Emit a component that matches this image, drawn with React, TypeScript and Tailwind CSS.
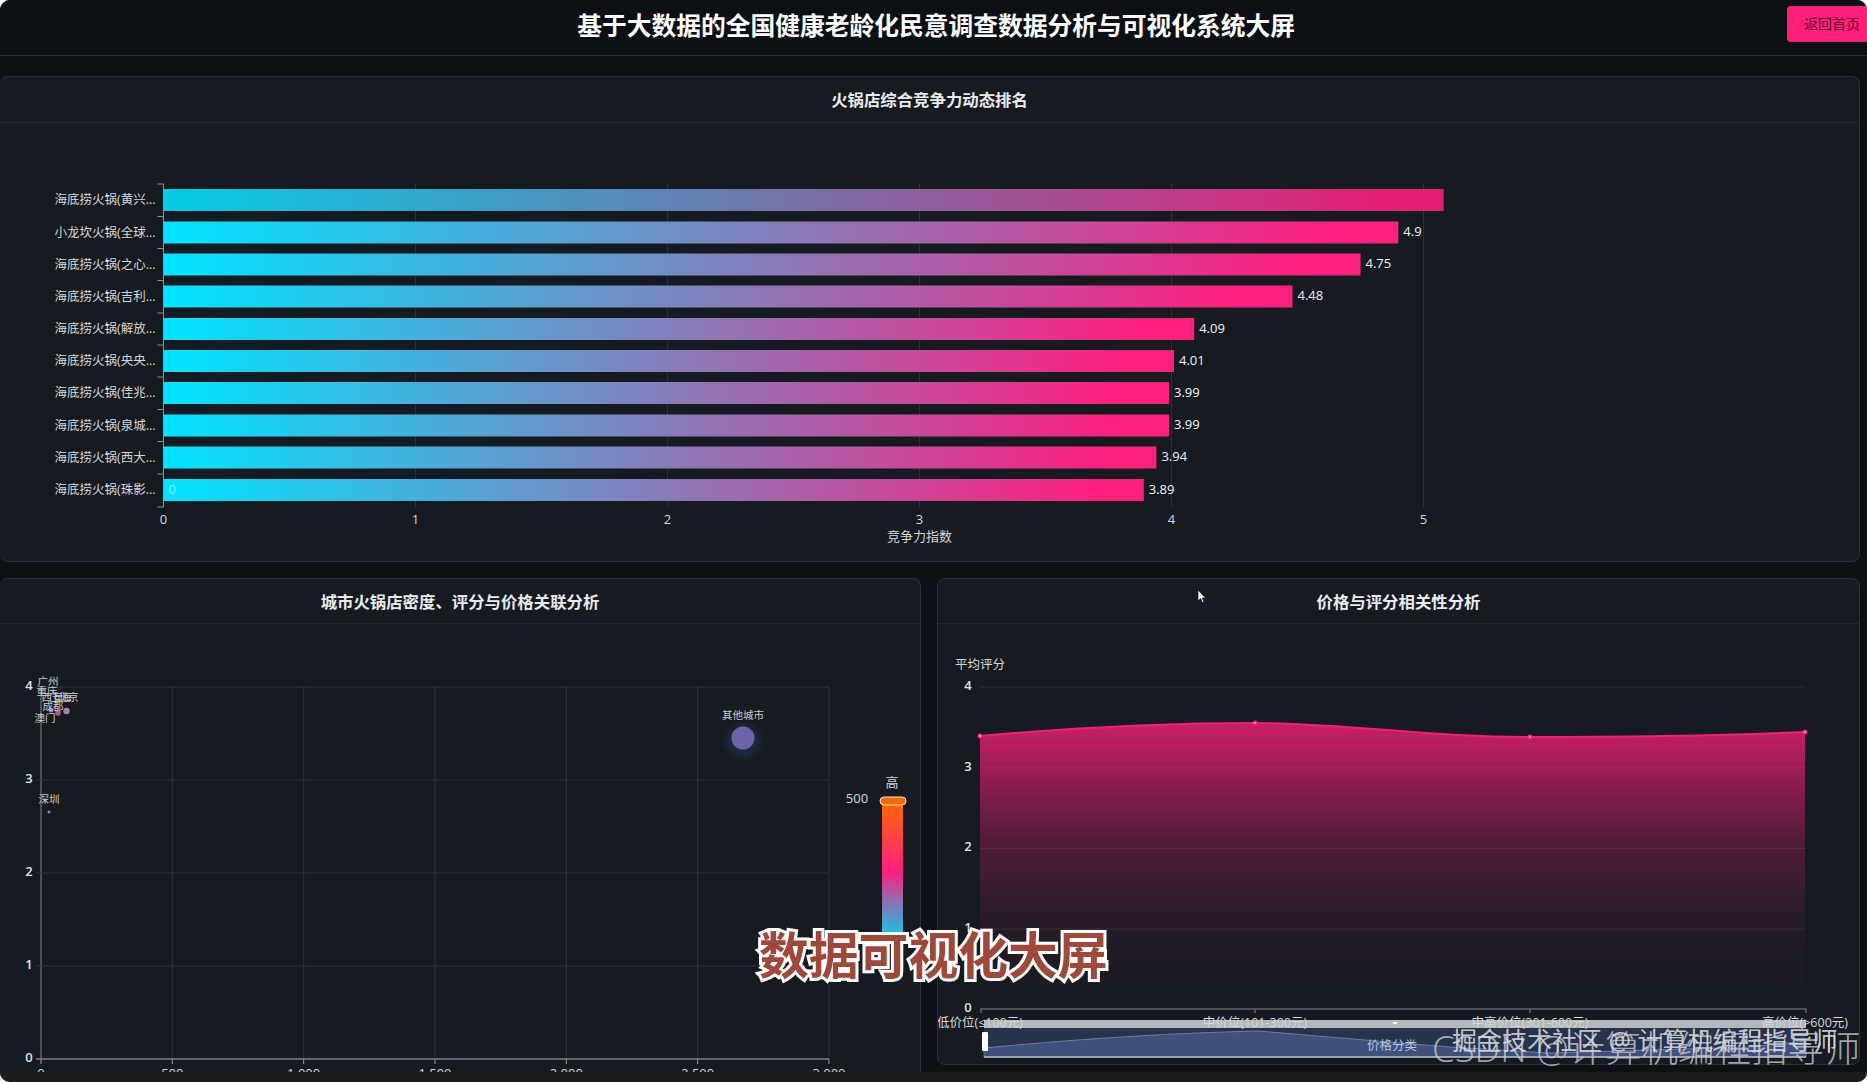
import React from "react";

const FONT = '"Open Sans","Noto Sans CJK SC",sans-serif';
const bars: [string, number, string, number][] = [
  ["海底捞火锅(黄兴...", 5.08, "", 189],
  ["小龙坎火锅(全球...", 4.9, "4.9", 221.5],
  ["海底捞火锅(之心...", 4.75, "4.75", 253.5],
  ["海底捞火锅(吉利...", 4.48, "4.48", 285.5],
  ["海底捞火锅(解放...", 4.09, "4.09", 318],
  ["海底捞火锅(央央...", 4.01, "4.01", 350],
  ["海底捞火锅(佳兆...", 3.99, "3.99", 382],
  ["海底捞火锅(泉城...", 3.99, "3.99", 414.5],
  ["海底捞火锅(西大...", 3.94, "3.94", 446.5],
  ["海底捞火锅(珠影...", 3.89, "3.89", 479],
];

function Panel({ title, className, headClass, children }: { title: string; className: string; headClass: string; children: React.ReactNode }) {
  return (
    <section className={`flex flex-col overflow-hidden rounded-lg border border-[#2a3038] bg-[#161b22] ${className}`}>
      <h2 className={`flex shrink-0 items-center justify-center border-b border-[#232932] pt-[2px] text-[16.4px] font-bold text-[#e8eaed] ${headClass}`}>
        {title}
      </h2>
      {children}
    </section>
  );
}

function BarChart() {
  return (
    <svg viewBox="-0.5 123 1859 438" className="h-[438px] w-full shrink-0" style={{ fontFamily: FONT }}>
      <defs>
        <linearGradient id="bar">
          <stop offset="0" stopColor="#00e5ff" />
          <stop offset="0.95" stopColor="#ff1f7f" />
          <stop offset="1" stopColor="#ff1f7f" />
        </linearGradient>
      </defs>
      {[0, 1, 2, 3, 4, 5].map((t) => {
        const x = 163 + t * 252;
        return (
          <g key={t}>
            <line x1={x} x2={x} y1="184" y2="507" stroke={t === 0 ? "#8b9096" : "#2b3139"} />
            <text x={x} y="524" textAnchor="middle" fontSize="13" fill="#d5d7da">{t}</text>
          </g>
        );
      })}
      <text x="919" y="541" textAnchor="middle" fontSize="13" fill="#d5d7da">竞争力指数</text>
      {bars.map(([name, v, label, y], i) => {
        const w = v * 252;
        return (
          <g key={i}>
            <line x1="157" x2="163" y1={y - 5} y2={y - 5} stroke="#8b9096" />
            <rect x="163" y={y} width={w} height="22" fill="url(#bar)" opacity={i === 0 ? 0.88 : 1} />
            <text x="155" y={y + 15} textAnchor="end" fontSize="12.5" fill="#d5d7da">{name}</text>
            {label && <text x={168 + w} y={y + 14.5} fontSize="13" fill="#f1f2f3">{label}</text>}
          </g>
        );
      })}
      <line x1="157" x2="163" y1="507" y2="507" stroke="#8b9096" />
      <text x="168" y="494" fontSize="13" fill="#7fe9fb">0</text>
    </svg>
  );
}

function Scatter() {
  const xs = [0, 500, 1000, 1500, 2000, 2500, 3000];
  const ys = [4, 3, 2, 1, 0];
  const cities: [string, number, number][] = [
    ["广州", 47, 684],
    ["重庆", 46, 694],
    ["西安", 51, 700],
    ["上海", 60, 700],
    ["北京", 67, 700],
    ["成都", 52, 709],
    ["澳门", 44, 721],
    ["深圳", 48, 802],
  ];
  return (
    <svg viewBox="-1 623 920 448" className="h-[448px] w-full shrink-0" style={{ fontFamily: FONT }}>
      <defs>
        <linearGradient id="vm" x1="0" x2="0" y1="0" y2="1">
          <stop offset="0" stopColor="#ff6a00" />
          <stop offset="0.5" stopColor="#ff1f7f" />
          <stop offset="1" stopColor="#00d4f0" />
        </linearGradient>
        <radialGradient id="glow">
          <stop offset="0.55" stopColor="#3f6fb8" stopOpacity="0.16" />
          <stop offset="1" stopColor="#3f6fb8" stopOpacity="0" />
        </radialGradient>
      </defs>
      {xs.map((v, i) => {
        const x = 40 + i * 131.33;
        return (
          <g key={v}>
            <line x1={x} x2={x} y1="686" y2="1058" stroke={i === 0 ? "#7d8288" : "#2f353d"} />
            <line x1={x} x2={x} y1="1058" y2="1063" stroke="#9a9ea3" />
            <text x={x} y="1077" textAnchor="middle" fontSize="13" fill="#d5d7da">{v === 0 ? "0" : v.toLocaleString("en-US")}</text>
          </g>
        );
      })}
      {ys.map((v, i) => {
        const y = 686 + i * 93;
        return (
          <g key={v}>
            <line x1="35" x2="828" y1={y} y2={y} stroke={v === 0 ? "#7d8288" : "#2f353d"} strokeWidth={v === 0 ? 1.5 : 1} />
            <text x="28" y={y + 3} textAnchor="middle" fontSize="13" fontWeight="600" fill="#e2e3e5">{v}</text>
          </g>
        );
      })}
      <circle cx="65.5" cy="710" r="3.2" fill="#a780b4" />
      <circle cx="57" cy="712" r="2.8" fill="#9c5f9c" />
      <circle cx="50" cy="709" r="2.5" fill="#7f7fc0" />
      <circle cx="48" cy="811" r="1.5" fill="#8b8f96" />
      {cities.map(([n, x, y]) => (
        <text key={n} x={x} y={y} textAnchor="middle" fontSize="10.5" fill="#c9cbce">{n}</text>
      ))}
      <circle cx="742" cy="740" r="22" fill="url(#glow)" />
      <circle cx="742" cy="737" r="11.5" fill="#6f63a8" />
      <text x="742" y="718" textAnchor="middle" fontSize="10.5" fill="#c9cbce">其他城市</text>
      <rect x="881" y="800" width="21" height="140" fill="url(#vm)" />
      <rect x="879" y="796" width="26" height="8" rx="4" fill="#ff6a00" stroke="#ffe3cc" strokeWidth="1" />
      <text x="891" y="786" textAnchor="middle" fontSize="13" fill="#d5d7da">高</text>
      <text x="856" y="802" textAnchor="middle" fontSize="13" fill="#d5d7da">500</text>
    </svg>
  );
}

function AreaChart() {
  const top = "M980 735 C1070 727 1165 722 1255 722 C1345 722 1440 737 1530 736 C1620 736 1715 735 1805 731";
  return (
    <svg viewBox="938 623 921 440" className="h-[440px] w-full shrink-0" style={{ fontFamily: FONT }}>
      <defs>
        <linearGradient id="area" gradientUnits="userSpaceOnUse" x1="0" x2="0" y1="722" y2="1000">
          <stop offset="0" stopColor="#ff1f7a" stopOpacity="0.78" />
          <stop offset="0.42" stopColor="#ff1f7a" stopOpacity="0.26" />
          <stop offset="0.72" stopColor="#ff1f7a" stopOpacity="0.07" />
          <stop offset="1" stopColor="#ff1f7a" stopOpacity="0" />
        </linearGradient>
      </defs>
      <text x="955" y="668" fontSize="12.5" fill="#d5d7da">平均评分</text>
      {[4, 3, 2, 1].map((v, i) => {
        const y = 686 + i * 80.7;
        return (
          <g key={v}>
            <line x1="980" x2="1806" y1={y} y2={y} stroke="#2b3139" />
            <text x="968" y={y + 3} textAnchor="middle" fontSize="13" fontWeight="600" fill="#e2e3e5">{v}</text>
          </g>
        );
      })}
      <text x="968" y="1011" textAnchor="middle" fontSize="13" fontWeight="600" fill="#e2e3e5">0</text>
      <path d={`${top} L1805 1008 L980 1008 Z`} fill="url(#area)" />
      <path d={top} fill="none" stroke="#f0207a" strokeWidth="2" />
      {[[980, 735], [1255, 722], [1530, 736], [1805, 731]].map(([x, y]) => (
        <g key={x}>
          <circle cx={x} cy={y} r="2.6" fill="#ff1f7a" />
          <circle cx={x} cy={y} r="1.1" fill="#ffb3d2" />
        </g>
      ))}
      <path d="M981 1012 V1008 H1806 V1012 M1255 1008 V1012 M1530 1008 V1012" fill="none" stroke="#5f646b" strokeWidth="1.5" />
      <rect x="984" y="1019" width="822" height="8" fill="#b4b7bb" />
      <rect x="984" y="1027" width="822" height="29" fill="#27334d" />
      <path d="M984 1047 C1100 1036 1180 1032 1258 1030 C1330 1036 1400 1042 1450 1046 L1550 1052 L1750 1046 L1806 1040 V1056 H984 Z" fill="#40507a" stroke="#7c8bb0" strokeWidth="0.8" />
      <line x1="984" x2="1806" y1="1056" y2="1056" stroke="#b8bcc4" strokeWidth="1.5" />
      <rect x="982" y="1031" width="6" height="19" rx="1" fill="#ffffff" />
      <rect x="1393" y="1021" width="4" height="2" fill="#ffffff" />
      <g fontSize="12.5" fill="#d5d7da" textAnchor="middle">
        <text x="980" y="1026">低价位(≤100元)</text>
        <text x="1255" y="1026">中价位(101-300元)</text>
        <text x="1530" y="1026">中高价位(301-600元)</text>
        <text x="1805" y="1026">高价位(&gt;600元)</text>
      </g>
      <text x="1392" y="1049" textAnchor="middle" fontSize="12.5" fill="#b9c6e6">价格分类</text>
    </svg>
  );
}

export default function App() {
  return (
    <div className="h-[1082px] w-[1867px] overflow-hidden bg-white">
      <div className="relative flex h-full w-full flex-col overflow-hidden rounded-[10px] bg-[#0d1116]" style={{ fontFamily: FONT }}>
        <header className="relative flex h-[56px] shrink-0 items-center justify-center border-b border-[#2a2e34] bg-[#0c1015]">
          <h1 className="mr-[-5px] mt-[-4px] text-[24.75px] font-bold text-white">基于大数据的全国健康老龄化民意调查数据分析与可视化系统大屏</h1>
          <button className="absolute right-0 top-[6px] flex h-[36px] w-[80px] items-center rounded-l bg-[#ff1f7a] pl-[17px] text-sm text-[#5e0a36]">返回首页</button>
        </header>
        <main className="flex min-h-0 flex-1 flex-col gap-4 pr-[7px] pt-5">
          <Panel title="火锅店综合竞争力动态排名" className="h-[486px] shrink-0 border-l-0" headClass="h-[46px]">
            <BarChart />
          </Panel>
          <div className="grid min-h-0 flex-1 grid-cols-[921px_923px] gap-4">
            <Panel title="城市火锅店密度、评分与价格关联分析" className="h-full rounded-b-none border-b-0 border-l-0" headClass="h-[45px]">
              <Scatter />
            </Panel>
            <Panel title="价格与评分相关性分析" className="h-[487px]" headClass="h-[45px]">
              <AreaChart />
            </Panel>
          </div>
        </main>
        <footer className="h-[10px] shrink-0 bg-[#1c1c1c]" />

        <div className="absolute left-[759px] top-[925px] text-[49.8px] font-bold leading-[60px] text-[#a0483a] [-webkit-text-stroke:6px_#ffffff] [paint-order:stroke_fill]">
          数据可视化大屏
        </div>
        <div className="absolute left-[1432px] top-[1021px] text-[36.5px] font-light leading-[54px] text-[#c9ccd1]/80">CSDN @计算机编程指导师</div>
        <div className="absolute left-[1452px] top-[1022px] text-[25px] leading-[36px] text-[#d8dadd]/90">掘金技术社区 @ 计算机编程指导师</div>
        <svg className="absolute left-[1197px] top-[589px]" width="10" height="15" viewBox="0 0 10 15">
          <path d="M1 1 V12 L3.6 9.6 L5.4 13.6 L7 12.9 L5.2 9 H8.6 Z" fill="#ffffff" stroke="#111" strokeWidth="0.7" />
        </svg>
      </div>
    </div>
  );
}
